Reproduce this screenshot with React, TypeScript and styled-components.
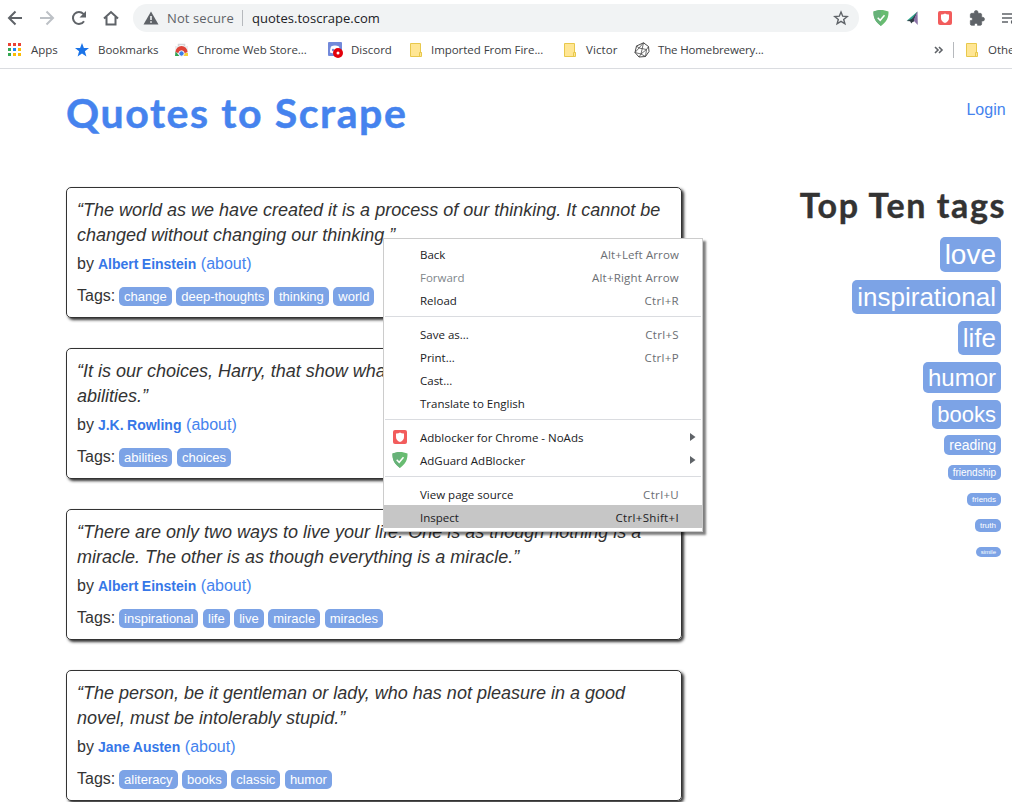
import React from "react";
import styled, { createGlobalStyle } from "styled-components";

const Global = createGlobalStyle`
  * { box-sizing: border-box; }
  html, body { margin: 0; padding: 0; overflow: hidden; background: #fff; }
`;

const uiFont = `"Open Sans", "Noto Sans", sans-serif`;

const Window = styled.div`
  position: relative;
  width: 1012px;
  height: 802px;
  overflow: hidden;
  display: flex;
  flex-direction: column;
  font-family: "Liberation Sans", Arial, sans-serif;
  font-size: 16px;
  color: #333;
`;

/* ---------- browser chrome ---------- */
const Toolbar = styled.div`
  display: flex;
  align-items: center;
  flex: none;
  height: 36px;
  width: 1030px;
  padding-left: 7px;
`;
const NavButtons = styled.div`
  display: flex;
  flex: none;
  gap: 16px;
  width: 126px;
  svg { display: block; flex: none; }
`;
const AddressBar = styled.div`
  display: flex;
  align-items: center;
  flex: none;
  width: 726px;
  height: 28px;
  padding: 0 10px;
  border-radius: 14px;
  background: #f1f3f4;
  font-family: ${uiFont};
  font-size: 13px;
  color: #202124;
`;
const NotSecure = styled.span`
  width: 75px;
  margin-left: 8px;
  color: #5f6368;
  white-space: nowrap;
  letter-spacing: 0.1px;
`;
const Divider = styled.span<{ $h: number }>`
  flex: none;
  width: 1px;
  height: ${(p) => p.$h}px;
  background: #b6b9bd;
`;
const Url = styled.span`
  flex: 1;
  margin-left: 9px;
  letter-spacing: 0.02px;
`;
const Extensions = styled.div`
  display: flex;
  align-items: center;
  gap: 16px;
  margin-left: 14px;
  svg { display: block; flex: none; }
`;
const BookmarkBar = styled.div`
  display: flex;
  align-items: center;
  flex: none;
  height: 33px;
  width: 1100px;
  padding: 0 0 5px 7px;
  border-bottom: 1px solid #dadce0;
  font-family: ${uiFont};
  font-size: 11.5px;
  color: #3c4043;
`;
const Bookmark = styled.div<{ $w: number; $gap?: number; $ls?: number }>`
  display: flex;
  align-items: center;
  flex: none;
  width: ${(p) => p.$w}px;
  gap: ${(p) => p.$gap ?? 8}px;
  white-space: nowrap;
  letter-spacing: ${(p) => p.$ls ?? 0}px;
  svg { flex: none; }
`;
const Chevron = styled.span`
  display: flex;
  flex: none;
  width: 20px;
`;
const OtherBookmarks = styled(Bookmark)`
  margin-left: 11px;
`;

/* ---------- page ---------- */
const Page = styled.main`
  display: flex;
  flex: none;
  justify-content: space-between;
  width: 1005px;
  padding-left: 66px;
`;
const MainColumn = styled.section`
  width: 616px;
`;
const Title = styled.h1`
  margin: 21px 0 49px;
  height: 48px;
  line-height: 46px;
  font-family: Lato, sans-serif;
  font-weight: 700;
  font-size: 41px;
  color: #4583ee;
  white-space: nowrap;
  letter-spacing: 1.6px;
  -webkit-text-stroke: 0.5px #4583ee;
`;
const Quote = styled.article`
  height: 131px;
  margin-bottom: 30px;
  padding: 10px;
  border: 1px solid #333;
  border-radius: 5px;
  box-shadow: 2px 2px 3px #333;
`;
const QuoteText = styled.p`
  margin: 0 0 5px;
  font-size: 18px;
  line-height: 25px;
  font-style: italic;
  white-space: nowrap;
`;
const Byline = styled.div`
  height: 22px;
  line-height: 22px;
  word-spacing: -0.4px;
  a { color: #4583ee; margin-left: 0.6px; }
`;
const Author = styled.b`
  font-size: 14px;
  color: #3677e8;
  letter-spacing: -0.01px;
`;
const Tag = styled.a`
  padding: 2px 5px;
  border-radius: 5px;
  background: #7ca3e6;
  color: #fff;
  font-size: 13px;
`;
const Tags = styled.div`
  margin-top: 10px;
  height: 22px;
  line-height: 22px;
  word-spacing: -0.6px;
  ${Tag} + ${Tag} { margin-left: 0.7px; }
`;
const Sidebar = styled.aside`
  display: flex;
  flex-direction: column;
  align-items: flex-end;
`;
const Login = styled.a`
  margin: 30px -0.6px 0 0;
  line-height: 22px;
  color: #4583ee;
`;
const SideTitle = styled.h2`
  margin: 63px -1px 12px 0;
  height: 41px;
  line-height: 41px;
  font-family: Lato, sans-serif;
  font-weight: 700;
  font-size: 34px;
  white-space: nowrap;
  letter-spacing: 1.6px;
  -webkit-text-stroke: 0.4px #333;
`;
const TopTag = styled.a<{ $size: number; $h: number; $gap: number }>`
  margin: ${(p) => p.$gap}px 4px 0 0;
  padding: 0 5px;
  height: ${(p) => p.$h}px;
  line-height: ${(p) => p.$h}px;
  border-radius: 5px;
  background: #7ca3e6;
  color: #fff;
  font-size: ${(p) => p.$size}px;
`;

/* ---------- context menu ---------- */
const Menu = styled.div`
  position: absolute;
  left: 383px;
  top: 238px;
  width: 320px;
  height: 294px;
  padding-top: 3px;
  border: 1px solid #ccc;
  background: #fff;
  box-shadow: 3px 3px 2px rgba(0, 0, 0, 0.5);
  font-family: ${uiFont};
  font-size: 11.5px;
  color: #202124;
`;
const MenuItem = styled.div<{ $active?: boolean; $disabled?: boolean }>`
  display: flex;
  align-items: center;
  height: 23px;
  padding: 1px 6px 0 8px;
  background: ${(p) => (p.$active ? "#c6c6c6" : "transparent")};
  color: ${(p) => (p.$disabled ? "#80868b" : "inherit")};
`;
const MenuIcon = styled.span`
  display: flex;
  width: 28px;
`;
const Label = styled.span`
  flex: 1;
  white-space: nowrap;
`;
const Shortcut = styled.span<{ $dark?: boolean; $ls: number }>`
  margin-right: 17px;
  color: ${(p) => (p.$dark ? "#202124" : "#6b6e73")};
  letter-spacing: ${(p) => p.$ls}px;
`;
const Separator = styled.div`
  height: 11px;
  padding: 5px 1px 0;
  &::before { content: ""; display: block; height: 1px; background: #dadce0; }
`;

/* ---------- icons ---------- */
const g = "#5f6368";
const Nav = ({ d, color = g }: { d: string; color?: string }) => (
  <svg width="16" height="16" viewBox="0 0 16 16" fill="none" stroke={color} strokeWidth="2"><path d={d} /></svg>
);
const Shield = () => (
  <svg width="16" height="16" viewBox="0 0 16 16">
    <path d="M8 0C5.600 0 2.700.5.500 1.600.500 4.200.100 10.700 8 16 15.900 10.700 15.500 4.200 15.500 1.600 13.300.5 10.400 0 8 0Z" fill="#68bc71" />
    <path d="M8 0C5.600 0 2.700.5.500 1.600.500 4.200.100 10.700 8 16Z" fill="#67b279" />
    <path d="m4.700 7.800 2.500 2.500 4.300-5" fill="none" stroke="#fff" strokeWidth="1.500" />
  </svg>
);
const RedBlocker = () => (
  <svg width="16" height="16" viewBox="0 0 16 16">
    <rect x="1" y="1" width="14" height="14" rx="2" fill="#f25c5c" />
    <path d="M4 4.500c1.500.2 2.800-.2 4-1 1.200.8 2.500 1.200 4 1V8c0 2.500-1.500 4-4 5-2.500-1-4-2.500-4-5Z" fill="#fff" />
  </svg>
);
const Folder = () => (
  <svg width="14" height="16" viewBox="0 0 14 16">
    <path d="M1.500 1.500h10v9h1v4h-11Z" fill="#ffe694" stroke="#e8c84c" />
    <path d="M10.500 14v-3.500h2" fill="none" stroke="#e8c84c" />
  </svg>
);
const AppsIcon = () => {
  const colors = ["#ea4335", "#ea4335", "#ea4335", "#34a853", "#1a86f5", "#fbbc04", "#34a853", "#fbbc04", "#fbbc04"];
  return (
    <svg width="15" height="15" viewBox="0 0 15 15">
      {colors.map((c, i) => <rect key={i} x={1 + (i % 3) * 5} y={1 + Math.floor(i / 3) * 5} width="3" height="3" fill={c} />)}
    </svg>
  );
};
const Triangle = () => (
  <svg width="6" height="8" viewBox="0 0 6 8"><path d="M0 0 5.500 4 0 8Z" fill={g} /></svg>
);

/* ---------- data ---------- */
const quotes = [
  { lines: ["“The world as we have created it is a process of our thinking. It cannot be", "changed without changing our thinking.”"], author: "Albert Einstein", tags: ["change", "deep-thoughts", "thinking", "world"] },
  { lines: ["“It is our choices, Harry, that show what we truly are, far more than our", "abilities.”"], author: "J.K. Rowling", tags: ["abilities", "choices"] },
  { lines: ["“There are only two ways to live your life. One is as though nothing is a", "miracle. The other is as though everything is a miracle.”"], author: "Albert Einstein", tags: ["inspirational", "life", "live", "miracle", "miracles"] },
  { lines: ["“The person, be it gentleman or lady, who has not pleasure in a good", "novel, must be intolerably stupid.”"], author: "Jane Austen", tags: ["aliteracy", "books", "classic", "humor"] },
];
const topTags: [string, number, number, number][] = [
  ["love", 28, 35, 0], ["inspirational", 26, 34, 8], ["life", 26, 34, 7], ["humor", 24, 31, 7], ["books", 22, 29, 7],
  ["reading", 14, 20, 6], ["friendship", 10, 15, 10], ["friends", 8, 13, 13], ["truth", 8, 13, 13], ["simile", 6, 10, 15],
];
type Item = { label: string; keys?: string; icon?: React.ReactNode; sub?: boolean; disabled?: boolean; active?: boolean; kls?: number };
const menu: Item[][] = [
  [{ label: "Back", keys: "Alt+Left Arrow", kls: 0.12 }, { label: "Forward", keys: "Alt+Right Arrow", disabled: true, kls: 0.22 }, { label: "Reload", keys: "Ctrl+R" }],
  [{ label: "Save as...", keys: "Ctrl+S" }, { label: "Print...", keys: "Ctrl+P" }, { label: "Cast..." }, { label: "Translate to English" }],
  [{ label: "Adblocker for Chrome - NoAds", icon: <RedBlocker />, sub: true }, { label: "AdGuard AdBlocker", icon: <Shield />, sub: true }],
  [{ label: "View page source", keys: "Ctrl+U" }, { label: "Inspect", keys: "Ctrl+Shift+I", active: true }],
];

export default function App() {
  return (
    <Window>
      <Global />
      <Toolbar>
        <NavButtons>
          <Nav d="M15 8H2M8.500 1.500 2 8l6.500 6.500" />
          <Nav d="M1 8h13M7.500 1.500 14 8l-6.500 6.500" color="#bdc1c6" />
          <svg width="16" height="16" viewBox="0 0 16 16">
            <path d="M13 11.200A6 6 0 1 1 12.400 3.900L13.500 5" fill="none" stroke={g} strokeWidth="2" />
            <path d="M15 1v6.500H8.500Z" fill={g} />
          </svg>
          <Nav d="M1 8.500 8 2l7 6.500M3.500 7v7.500h9V7" />
        </NavButtons>
        <AddressBar>
          <svg width="16" height="16" viewBox="0 0 16 16">
            <path d="M8 1.500 15.500 14.500H.5Z" fill={g} />
            <path d="M8 6v4M8 11.200v1.600" stroke="#f1f3f4" strokeWidth="1.600" />
          </svg>
          <NotSecure>Not secure</NotSecure>
          <Divider $h={16} />
          <Url>quotes.toscrape.com</Url>
          <svg width="16" height="16" viewBox="0 0 16 16">
            <path d="m8 2 1.700 4.200 4.500.3-3.500 2.900 1.200 4.400L8 11.400l-3.900 2.400 1.200-4.400L1.800 6.500l4.500-.3Z" fill="none" stroke={g} strokeWidth="1.400" />
          </svg>
        </AddressBar>
        <Extensions>
          <Shield />
          <svg width="16" height="16" viewBox="0 0 16 16">
            <path d="M12.500 1.500 2 10.500l5 1Z" fill="#2fa58c" />
            <path d="M12.500 1.500 5.500 11l3 1Z" fill="#3c3a55" />
            <path d="m12.500 1.500-4 9L12.800 15Z" fill="#8a72a6" />
            <path d="M1.500 11 8 8.500l1 2-2.800 3-1-2.200Z" fill="#2d3a42" />
          </svg>
          <RedBlocker />
          <svg width="16" height="16" viewBox="0 0 24 24">
            <path d="M20.500 11H19V7c0-1.100-.9-2-2-2h-3.500V3.500a2.700 2.700 0 0 0-5.500 0V5H4c-1.100 0-2 .9-2 2v4.200h1a2.200 2.200 0 0 1 0 4.600H2V21c0 1.100.9 2 2 2h4.200v-1a2.300 2.300 0 0 1 4.600 0v1H17c1.100 0 2-.9 2-2v-4.500h1.500a2.750 2.750 0 0 0 0-5.500Z" fill={g} stroke={g} />
          </svg>
          <svg width="16" height="16" viewBox="0 0 16 16">
            <path d="M1 4h11M1 8h11M1 12h6" stroke={g} strokeWidth="1.600" />
            <circle cx="12" cy="12" r="2.200" fill={g} />
          </svg>
        </Extensions>
      </Toolbar>
      <BookmarkBar>
        <Bookmark $w={67} $gap={9}><AppsIcon />Apps</Bookmark>
        <Bookmark $w={100}>
          <svg width="16" height="16" viewBox="0 0 16 16"><path d="m8 1 1.900 5H15l-4.100 3.200 1.500 5.300L8 11.400l-4.400 3.100 1.500-5.300L1 6h5.100Z" fill="#1a73e8" /></svg>
          Bookmarks
        </Bookmark>
        <Bookmark $w={153} $ls={-0.05}>
          <svg width="15" height="16" viewBox="0 0 15 16">
            <path d="M4.500 4.500V2.500h6v2" fill="none" stroke="#d4d6d8" strokeWidth="1.500" />
            <path d="M1 4h13v10H1Z" fill="#eceeef" />
            <path d="M1.500 10a6 6 0 0 1 12 0L11 11H4Z" fill="#df4337" />
            <path d="M1.500 9.500 5.500 14H1Z" fill="#31a350" />
            <path d="M10 11h4v3H8.500Z" fill="#f8ce3a" />
            <circle cx="7.500" cy="11.500" r="2.700" fill="#3b7de8" stroke="#fff" />
          </svg>
          Chrome Web Store...
        </Bookmark>
        <Bookmark $w={82}>
          <svg width="16" height="16" viewBox="0 0 16 16">
            <rect x="1" width="14" height="14" rx="1" fill="#7289da" />
            <path d="M4 4.500c2.500-1.200 5.500-1.200 8 0 .8 2 1 4 .8 6-3 1.200-7 1.200-9.800 0-.1-2 .2-4 1-6Z" fill="#fff" />
            <circle cx="6" cy="8" r="1.200" fill="#7289da" />
            <circle cx="11" cy="11" r="5" fill="#e3000b" />
            <circle cx="11" cy="11" r="1.500" fill="#fff" />
          </svg>
          Discord
        </Bookmark>
        <Bookmark $w={154} $ls={-0.05}><Folder />Imported From Fire...</Bookmark>
        <Bookmark $w={71} $gap={9} $ls={0.1}><Folder />Victor</Bookmark>
        <Bookmark $w={299} $ls={-0.15}>
          <svg width="16" height="16" viewBox="0 0 16 16" fill="none" stroke="#4a4a4a" strokeWidth="1" strokeLinejoin="round">
            <path d="m9.500.8 5 3.700.5 5-3.500 5-6.500.5-4-4.500L2.500 4Z" />
            <path d="M9.500.8 5 6l7.500 1.500L7 12ZM5 6 2.500 4M5 6l-4 4.500L7 12l-2 3M7 12l4.500 2.500 1-7 2-3" strokeWidth=".8" />
          </svg>
          The Homebrewery...
        </Bookmark>
        <Chevron><svg width="12" height="10" viewBox="0 0 12 10" fill="none" stroke={g} strokeWidth="1.600"><path d="m2 2 3 3-3 3m4-6 3 3-3 3" /></svg></Chevron>
        <Divider $h={16} />
        <OtherBookmarks $w={110} $gap={9}><Folder />Other bookmarks</OtherBookmarks>
      </BookmarkBar>
      <Page>
        <MainColumn>
          <Title>Quotes to Scrape</Title>
          {quotes.map((q) => (
            <Quote key={q.tags[0]}>
              <QuoteText>{q.lines[0]}<br />{q.lines[1]}</QuoteText>
              <Byline>by <Author>{q.author}</Author> <a>(about)</a></Byline>
              <Tags>Tags: {q.tags.map((t) => <React.Fragment key={t}><Tag>{t}</Tag> </React.Fragment>)}</Tags>
            </Quote>
          ))}
        </MainColumn>
        <Sidebar>
          <Login>Login</Login>
          <SideTitle>Top Ten tags</SideTitle>
          {topTags.map(([name, size, h, gap]) => <TopTag key={name} $size={size} $h={h} $gap={gap}>{name}</TopTag>)}
        </Sidebar>
      </Page>
      <Menu>
        {menu.map((group, gi) => (
          <React.Fragment key={gi}>
            {gi > 0 && <Separator />}
            {group.map((it) => (
              <MenuItem key={it.label} $active={it.active} $disabled={it.disabled}>
                <MenuIcon>{it.icon}</MenuIcon>
                <Label>{it.label}</Label>
                {it.keys && <Shortcut $dark={it.active} $ls={it.kls ?? 0.33}>{it.keys}</Shortcut>}
                {it.sub && <Triangle />}
              </MenuItem>
            ))}
          </React.Fragment>
        ))}
      </Menu>
    </Window>
  );
}
